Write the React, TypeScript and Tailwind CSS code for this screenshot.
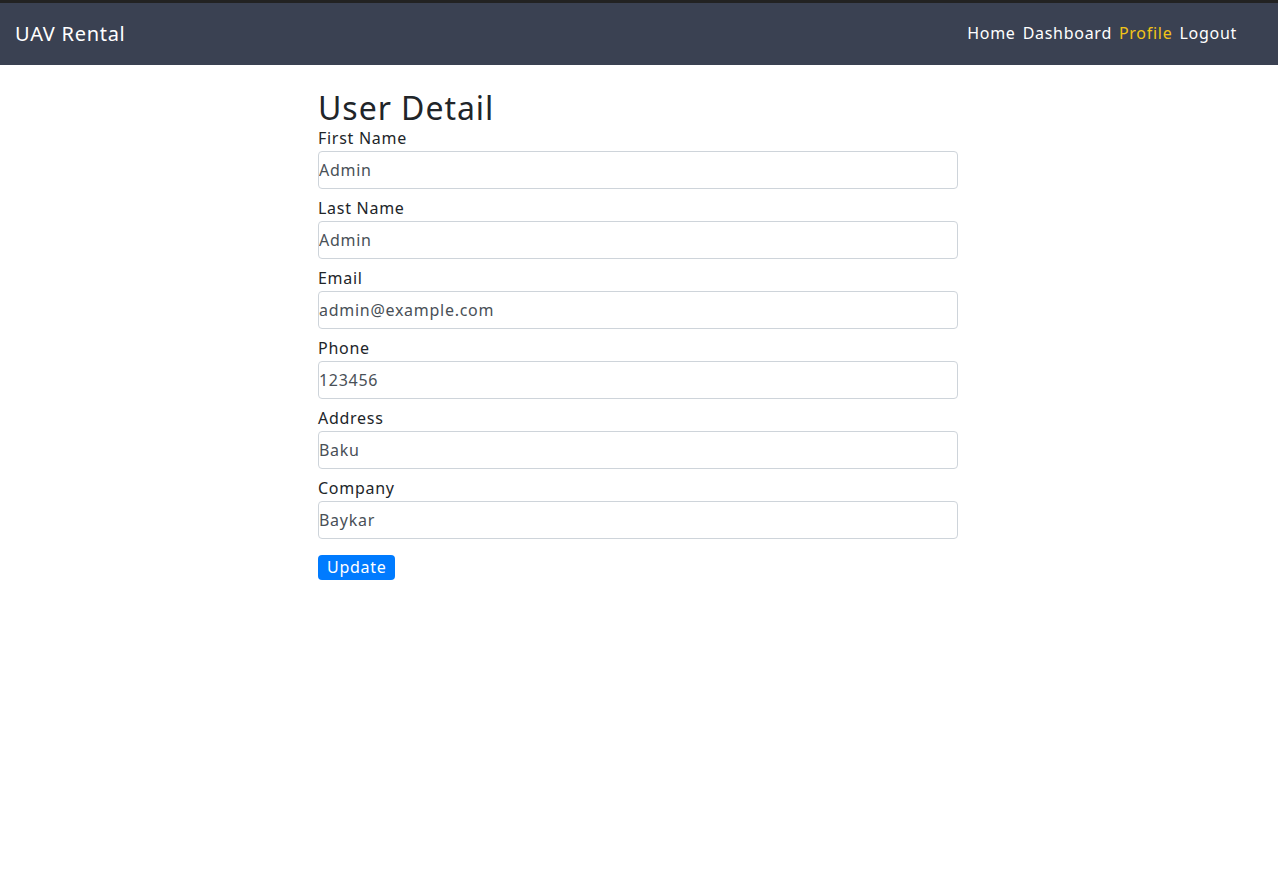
import { useState } from 'react'

interface Field {
  label: string
  value: string
}

const fields: Field[] = [
  { label: 'First Name', value: 'Admin' },
  { label: 'Last Name', value: 'Admin' },
  { label: 'Email', value: 'admin@example.com' },
  { label: 'Phone', value: '123456' },
  { label: 'Address', value: 'Baku' },
  { label: 'Company', value: 'Baykar' },
]

export default function App() {
  const [values, setValues] = useState(fields.map(f => f.value))

  return (
    <div className="min-h-screen bg-white text-[#212529] font-['Noto_Sans',sans-serif] tracking-[0.045em]">
      {/* Navbar */}
      <nav className="h-[65px] bg-[#3a4152] border-t-[3px] border-[#222222] flex items-center justify-between pl-[15px] pr-[41px]">
        <a className="text-[20px] text-white -mt-[1px]">UAV Rental</a>
        <div className="flex items-center gap-[7px] text-[16px] -mt-[2px]">
          <a className="text-white">Home</a>
          <a className="text-white">Dashboard</a>
          <a className="text-[#f2c417]">Profile</a>
          <a className="text-white">Logout</a>
        </div>
      </nav>

      {/* Form */}
      <div className="w-[640px] mx-auto pt-[24px] -translate-x-[1px]">
        <h1 className="text-[32px] leading-[38px] tracking-[0.03em] mb-0">User Detail</h1>
        {fields.map((f, i) => (
          <div key={f.label} className="mb-[8px]">
            <label className="block text-[16px] leading-[22px] mb-[2px]">{f.label}</label>
            <input
              className="block w-full h-[38px] border border-[#ced4da] rounded-[4px] pl-0 pr-[1px] text-[16px] text-[#495057] outline-none"
              value={values[i]}
              onChange={e => {
                const next = [...values]
                next[i] = e.target.value
                setValues(next)
              }}
            />
          </div>
        ))}
        <button className="mt-[8px] h-[25px] px-[9px] bg-[#007bff] text-white text-[16px] leading-[25px] rounded-[4px]">
          Update
        </button>
      </div>
    </div>
  )
}
